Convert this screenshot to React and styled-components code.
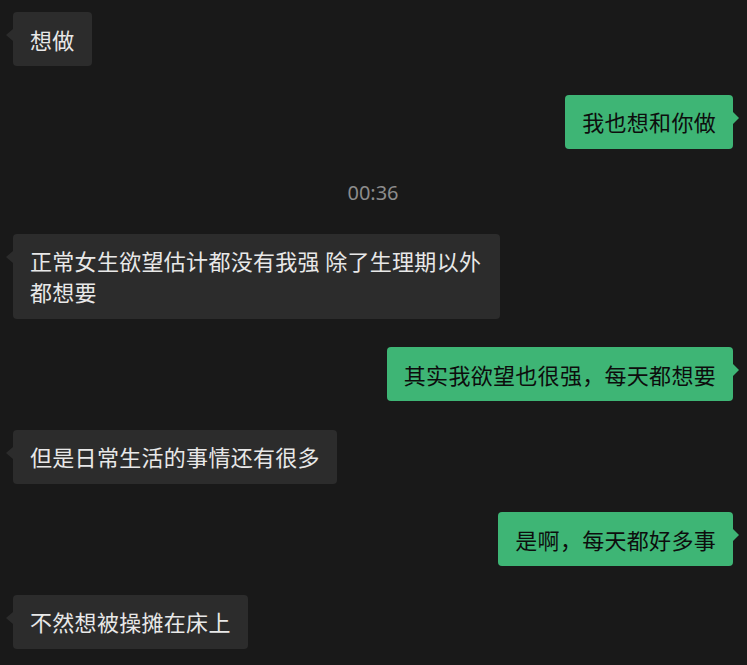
import React from "react";
import styled, { createGlobalStyle, css } from "styled-components";

const GlobalStyle = createGlobalStyle`
  html, body {
    margin: 0;
    padding: 0;
    background: #191919;
  }
  body {
    font-family: "Noto Sans CJK SC", "Noto Sans", sans-serif;
  }
`;

const Chat = styled.div`
  width: 747px;
  height: 665px;
  box-sizing: border-box;
  padding: 12px 14px 0 13px;
  display: flex;
  flex-direction: column;
  gap: 28.5px;
  overflow: hidden;
  background: #191919;
`;

const Row = styled.div`
  display: flex;
  justify-content: ${(p) => (p.$mine ? "flex-end" : "flex-start")};
`;

const Time = styled.div`
  height: 28px;
  line-height: 32px;
  text-align: center;
  font-family: "Noto Sans", "Noto Sans CJK SC", sans-serif;
  font-size: 20px;
  color: #8c8c8c;
`;

const tail = css`
  content: "";
  position: absolute;
  top: 17px;
  border-top: 6px solid transparent;
  border-bottom: 6px solid transparent;
`;

const Bubble = styled.div`
  position: relative;
  max-width: 453px;
  padding: 11.5px 17px;
  border-radius: 4px;
  font-size: 22px;
  line-height: 31px;
  letter-spacing: 0.3px;
  word-break: break-all;
  background: ${(p) => (p.$mine ? "#3eb575" : "#2c2c2c")};
  color: ${(p) => (p.$mine ? "#0d0d0d" : "#e8e8e8")};

  &::before {
    ${tail}
    ${(p) =>
      p.$mine
        ? css`
            right: -6px;
            border-left: 6px solid #3eb575;
          `
        : css`
            left: -7px;
            border-right: 7px solid #2c2c2c;
          `}
  }
`;

const messages = [
  { text: "想做" },
  { text: "我也想和你做", mine: true },
  { time: "00:36" },
  { text: "正常女生欲望估计都没有我强 除了生理期以外都想要" },
  { text: "其实我欲望也很强，每天都想要", mine: true },
  { text: "但是日常生活的事情还有很多" },
  { text: "是啊，每天都好多事", mine: true },
  { text: "不然想被操摊在床上" },
];

const App = () => {
  return (
    <>
      <GlobalStyle />
      <Chat>
        {messages.map((m, i) =>
          m.time ? (
            <Time key={i}>{m.time}</Time>
          ) : (
            <Row key={i} $mine={m.mine}>
              <Bubble $mine={m.mine}>{m.text}</Bubble>
            </Row>
          )
        )}
      </Chat>
    </>
  );
};

export default App;
